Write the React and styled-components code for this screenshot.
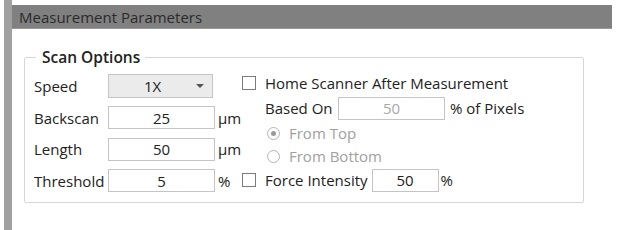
import React from "react";
import styled, { createGlobalStyle } from "styled-components";

const Global = createGlobalStyle`
  html, body { margin: 0; padding: 0; background: #ffffff; }
  body { font-family: "Open Sans", "Noto Sans", sans-serif; color: #222; }
  * { box-sizing: border-box; }
`;

const Frame = styled.div`
  display: flex;
  width: 619px;
  height: 230px;
  padding-left: 4px;
  background: #fff;
  overflow: hidden;
`;

const Rail = styled.div`
  width: 8px;
  flex: none;
  background: #a0a0a0;
`;

const Main = styled.div`
  flex: 1;
  display: flex;
  flex-direction: column;
  padding-top: 5px;
`;

const Header = styled.div`
  height: 24px;
  margin-right: 7px;
  background: #808080;
  color: #2b2b2b;
  font-size: 15px;
  line-height: 24px;
  padding-left: 7px;
  border-bottom: 1px solid #9a9a9a;
`;

const Content = styled.div`
  padding: 19px 0 0 12px;
`;

const Group = styled.fieldset`
  width: 560px;
  height: 155px;
  margin: 0;
  padding: 4px 0 0 9px;
  border: 1px solid #d6d6d6;
  border-radius: 2px;
  display: flex;
`;

const Legend = styled.legend`
  margin-left: 2px;
  padding: 0 5px 0 6px;
  font-size: 15.5px;
  font-weight: 600;
  color: #222;
  line-height: 18px;
`;

const Column = styled.div`
  display: flex;
  flex-direction: column;
  width: ${(p) => p.$w}px;
  flex: none;
`;

const Row = styled.div`
  display: flex;
  align-items: center;
  height: ${(p) => p.$h}px;
  padding-left: ${(p) => p.$indent || 0}px;
  font-size: 15px;
  white-space: nowrap;
`;

const Label = styled.span`
  width: ${(p) => p.$w}px;
  flex: none;
  color: #222;
`;

const Field = styled.div`
  width: ${(p) => p.$w}px;
  height: 23px;
  flex: none;
  border: 1px solid #c4c4c4;
  background: #fff;
  display: flex;
  align-items: center;
  justify-content: center;
  color: ${(p) => (p.$muted ? "#a8a8a8" : "#222")};
  font-size: 15px;
`;

const Combo = styled.div`
  width: 105px;
  height: 24px;
  flex: none;
  border: 1px solid #c6c6c6;
  background: #ebebeb;
  display: flex;
  align-items: center;
  padding: 0 8px 0 0;
  font-size: 15px;
`;

const ComboText = styled.span`
  flex: 1;
  text-align: center;
`;

const Arrow = styled.span`
  width: 0;
  height: 0;
  border-left: 4px solid transparent;
  border-right: 4px solid transparent;
  border-top: 4px solid #555;
`;

const Unit = styled.span`
  margin-left: ${(p) => p.$gap ?? 3}px;
  color: #222;
`;

const Check = styled.span`
  width: 14px;
  height: 14px;
  flex: none;
  border: 1px solid #7a7a7a;
  background: #fff;
  margin-right: 9px;
`;

const Radio = styled.span`
  width: 13px;
  height: 13px;
  flex: none;
  border-radius: 50%;
  border: 1px solid #b4b4b4;
  background: #fff;
  margin: 0 9px 0 2px;
  display: flex;
  align-items: center;
  justify-content: center;
  &::after {
    content: "";
    width: 5px;
    height: 5px;
    border-radius: 50%;
    background: ${(p) => (p.$on ? "#9a9a9a" : "transparent")};
  }
`;

const Muted = styled.span`
  color: #a0a0a0;
`;

const IntensityField = styled(Field)`
  margin-left: 4px;
`;

export default function App() {
  return (
    <>
      <Global />
      <Frame>
        <Rail />
        <Main>
          <Header>Measurement Parameters</Header>
          <Content>
            <Group>
              <Legend>Scan Options</Legend>
              <Column $w={208}>
                <Row $h={32}>
                  <Label $w={74}>Speed</Label>
                  <Combo>
                    <ComboText>1X</ComboText>
                    <Arrow />
                  </Combo>
                </Row>
                <Row $h={31}>
                  <Label $w={74}>Backscan</Label>
                  <Field $w={107}>25</Field>
                  <Unit>µm</Unit>
                </Row>
                <Row $h={32}>
                  <Label $w={74}>Length</Label>
                  <Field $w={107}>50</Field>
                  <Unit>µm</Unit>
                </Row>
                <Row $h={31}>
                  <Label $w={74}>Threshold</Label>
                  <Field $w={107}>5</Field>
                  <Unit>%</Unit>
                </Row>
              </Column>
              <Column $w={340}>
                <Row $h={26}>
                  <Check />
                  <span>Home Scanner After Measurement</span>
                </Row>
                <Row $h={24} $indent={23}>
                  <Label $w={73}>Based On</Label>
                  <Field $w={107} $muted>50</Field>
                  <Unit $gap={5}>% of Pixels</Unit>
                </Row>
                <Row $h={26} $indent={23}>
                  <Radio $on />
                  <Muted>From Top</Muted>
                </Row>
                <Row $h={20} $indent={23}>
                  <Radio />
                  <Muted>From Bottom</Muted>
                </Row>
                <Row $h={28}>
                  <Check />
                  <span>Force Intensity</span>
                  <IntensityField $w={67}>50</IntensityField>
                  <Unit $gap={2}>%</Unit>
                </Row>
              </Column>
            </Group>
          </Content>
        </Main>
      </Frame>
    </>
  );
}
